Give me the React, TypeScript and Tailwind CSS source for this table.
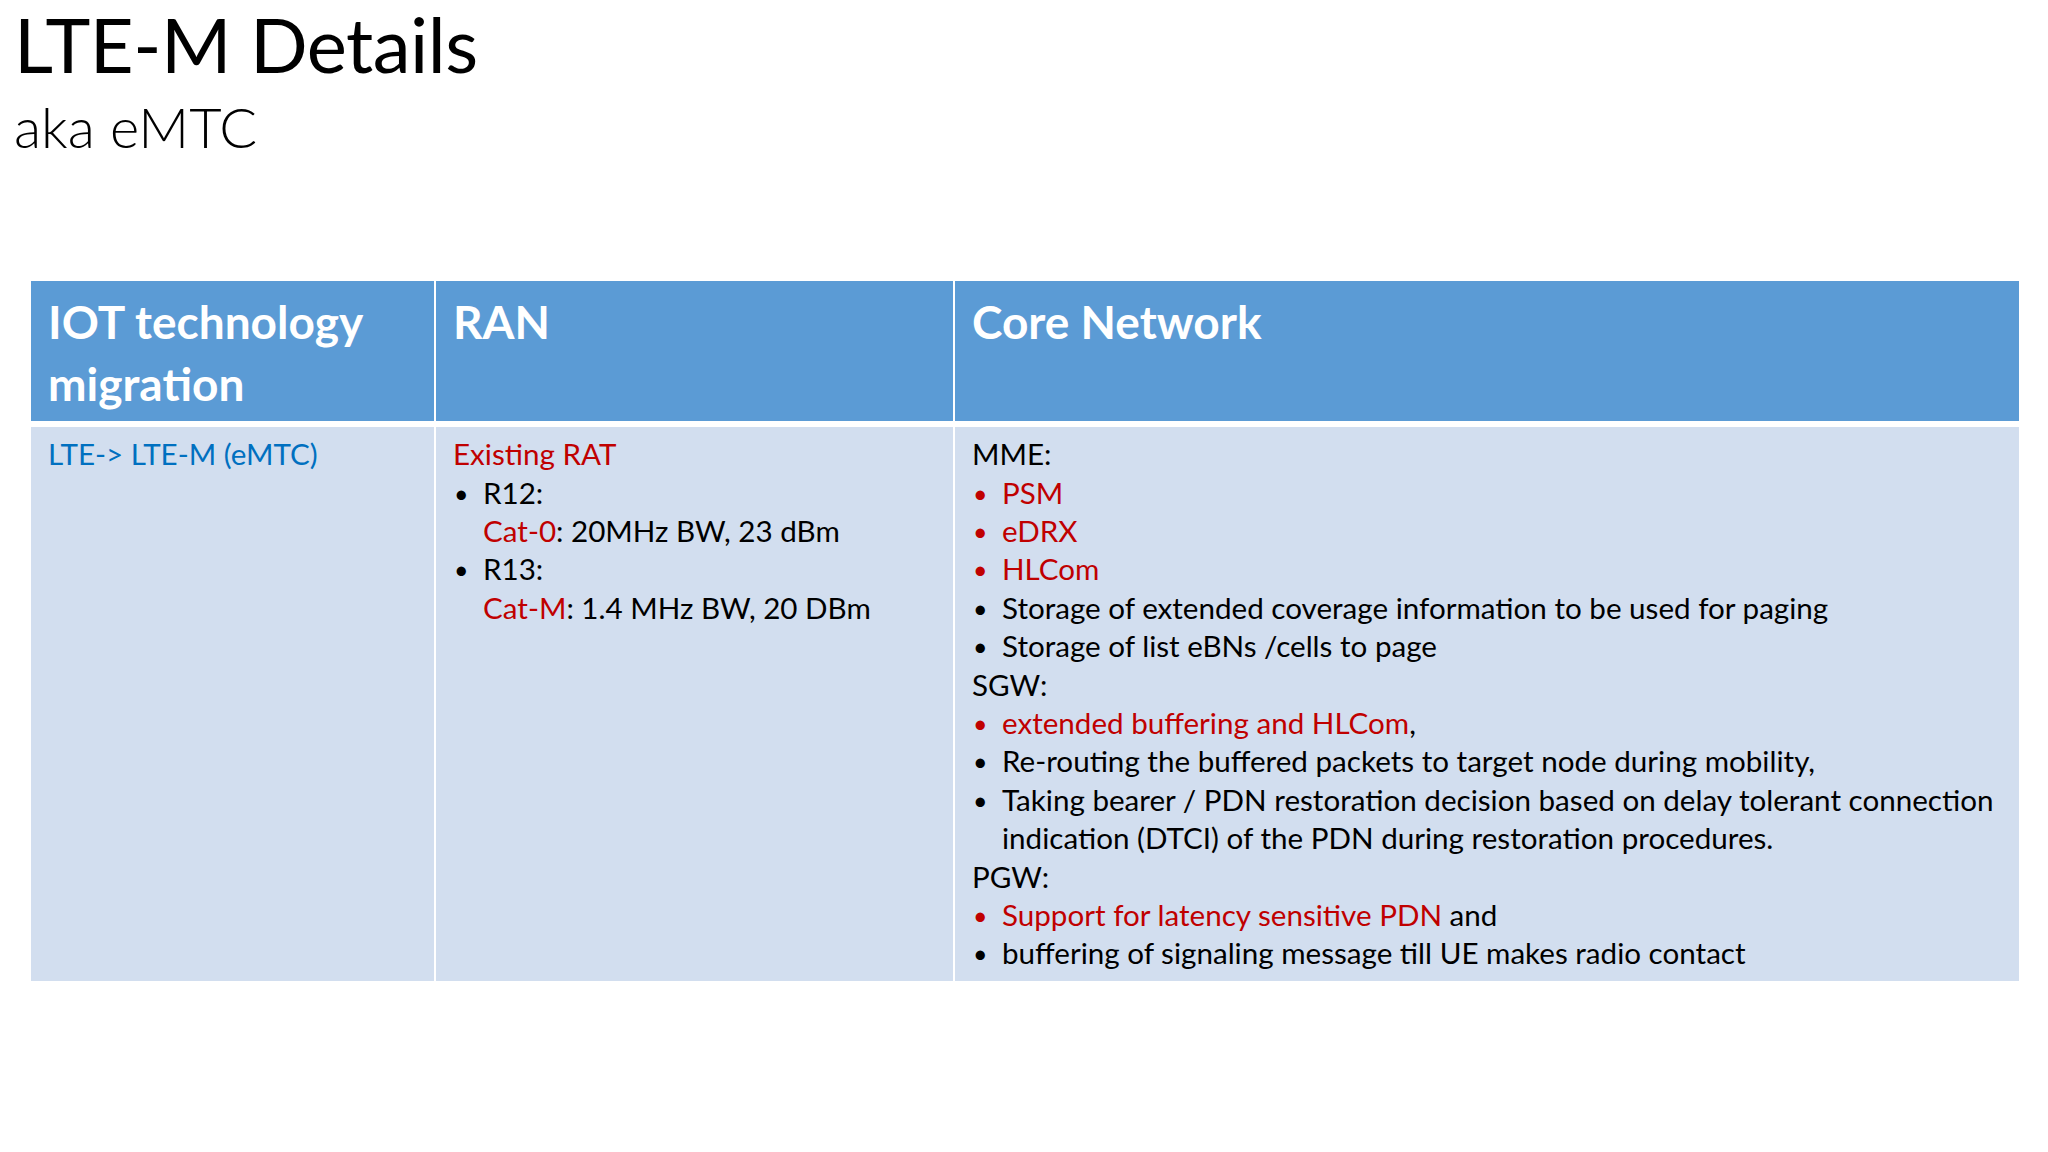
import type { ReactNode } from "react";

function Item({ red, children }: { red?: boolean; children: ReactNode }) {
  return (
    <div className="flex items-start">
      <span className={`w-[30px] shrink-0 pl-[1px] text-[25px] leading-[38.4px] ${red ? "text-[#c00000]" : "text-black"}`}>•</span>
      <span>{children}</span>
    </div>
  );
}

function Red({ children }: { children: ReactNode }) {
  return <span className="text-[#c00000]">{children}</span>;
}

export default function App() {
  return (
    <div className="w-[2048px] h-[1152px] bg-white font-['Lato',sans-serif] text-black">
      {/* slide title */}
      <div className="pl-[14px]">
        <h1 className="text-[76px] leading-[1.2] tracking-[-0.5px] -mt-[2px]">LTE-M Details</h1>
        <p className="mt-[10px] text-[56px] leading-none font-light">aka eMTC</p>
      </div>

      {/* comparison table */}
      <div className="ml-[31px] mt-[126px] w-[1988px] grid grid-cols-[403px_517px_1064px] gap-x-[2px] gap-y-[6px] bg-white">
        <div className="h-[140px] bg-[#5b9bd5] pl-[17px] pt-[10px] text-[46px] leading-[62px] font-bold text-white">
          IOT technology
          <br />
          migration
        </div>
        <div className="h-[140px] bg-[#5b9bd5] pl-[17px] pt-[10px] text-[46px] leading-[62px] font-bold text-white">RAN</div>
        <div className="h-[140px] bg-[#5b9bd5] pl-[17px] pt-[10px] text-[46px] leading-[62px] font-bold text-white">Core Network</div>

        <div className="h-[554px] bg-[#d2deef] pl-[17px] pt-[8px] text-[29.6px] leading-[38.4px] text-[#0070c0]">
          LTE-&gt; LTE-M (eMTC)
        </div>
        <div className="h-[554px] bg-[#d2deef] pl-[17px] pt-[8px] text-[29.6px] leading-[38.4px]">
          <Red>Existing RAT</Red>
          <Item>
            R12:
            <br />
            <Red>Cat-0</Red>: 20MHz BW, 23 dBm
          </Item>
          <Item>
            R13:
            <br />
            <Red>Cat-M</Red>: 1.4 MHz BW, 20 DBm
          </Item>
        </div>
        <div className="h-[554px] bg-[#d2deef] pl-[17px] pt-[8px] text-[29.6px] leading-[38.4px]">
          <div>MME:</div>
          <Item red><Red>PSM</Red></Item>
          <Item red><Red>eDRX</Red></Item>
          <Item red><Red>HLCom</Red></Item>
          <Item>Storage of extended coverage information to be used for paging</Item>
          <Item>Storage of list eBNs /cells to page</Item>
          <div>SGW:</div>
          <Item red>
            <Red>extended buffering and HLCom</Red>,
          </Item>
          <Item>Re-routing the buffered packets to target node during mobility,</Item>
          <Item>
            Taking bearer / PDN restoration decision based on delay tolerant connection
            <br />
            indication (DTCI) of the PDN during restoration procedures.
          </Item>
          <div>PGW:</div>
          <Item red>
            <Red>Support for latency sensitive PDN</Red> and
          </Item>
          <Item>buffering of signaling message till UE makes radio contact</Item>
        </div>
      </div>
    </div>
  );
}
